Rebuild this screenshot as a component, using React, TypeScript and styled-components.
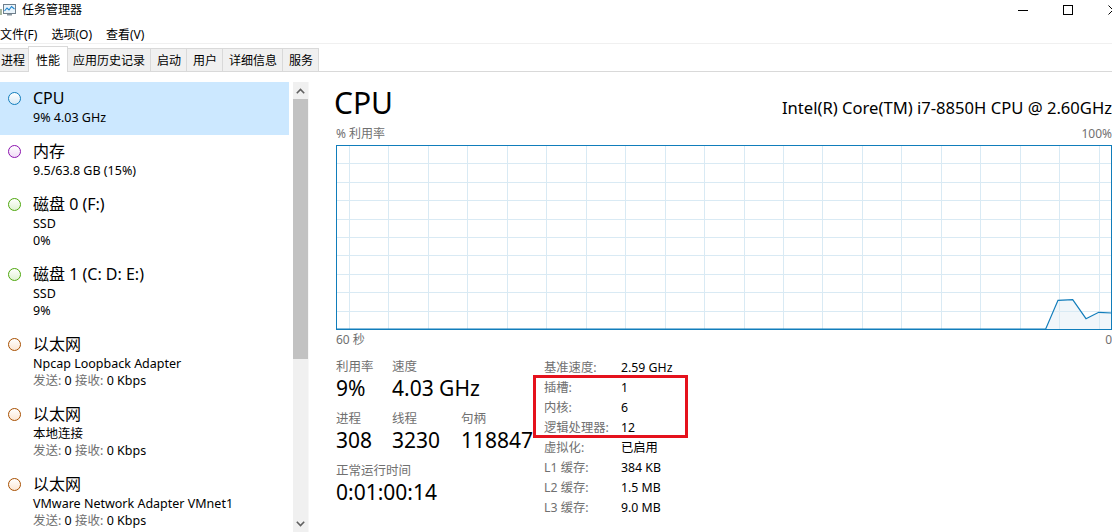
import React from 'react'
import styled, { createGlobalStyle } from 'styled-components'

const FONT = `"Noto Sans", "Noto Sans CJK SC", sans-serif`

const GlobalStyle = createGlobalStyle`
  html, body {
    margin: 0;
    padding: 0;
    background: #fff;
  }
  body {
    font-family: ${FONT};
    color: #000;
  }
  * {
    box-sizing: border-box;
  }
`

const Window = styled.div`
  width: 1112px;
  height: 532px;
  overflow: hidden;
  display: flex;
  flex-direction: column;
  background: #fff;
`

const TitleBar = styled.div`
  height: 19px;
  display: flex;
  align-items: center;
  flex-shrink: 0;
`

const AppIcon = styled.svg`
  margin-left: -2px;
  flex-shrink: 0;
`

const TitleText = styled.span`
  font-size: 12px;
  line-height: 19px;
  margin-left: 6px;
`

const WindowControls = styled.div`
  margin-left: auto;
  margin-right: -23px;
  display: flex;
  height: 100%;
`

const ControlButton = styled.div`
  width: 45px;
  height: 100%;
  display: flex;
  align-items: center;
  justify-content: center;
`

const MenuBar = styled.div`
  height: 25px;
  padding-top: 7px;
  display: flex;
  align-items: center;
  gap: 14px;
  border-bottom: 1px solid #f0f0f0;
  flex-shrink: 0;
`

const MenuItem = styled.span`
  font-size: 12px;
  line-height: 17px;
`

const TabStrip = styled.div`
  height: 28px;
  display: flex;
  align-items: flex-end;
  margin-left: -6px;
  border-bottom: 1px solid #d9d9d9;
  flex-shrink: 0;
`

const Tab = styled.div<{ $active?: boolean; $last?: boolean }>`
  position: relative;
  z-index: ${({ $active }) => ($active ? 1 : 0)};
  height: ${({ $active }) => ($active ? 26 : 23)}px;
  margin: 0 ${({ $active }) => ($active ? '-2px -1px -2px' : '0 0 0')};
  padding: ${({ $active }) => ($active ? '0 7px' : '0 5px 0 6px')};
  display: flex;
  align-items: center;
  font-size: 12px;
  background: ${({ $active }) => ($active ? '#fff' : '#f0f0f0')};
  border-top: 1px solid #d9d9d9;
  border-left: 1px solid #d9d9d9;
  border-right: ${({ $active, $last }) => ($active || $last ? '1px solid #d9d9d9' : 'none')};
`

const Body = styled.div`
  flex: 1;
  min-height: 0;
  display: flex;
`

const Sidebar = styled.div`
  width: 309px;
  flex-shrink: 0;
  display: flex;
`

const ResourceList = styled.div`
  width: 289px;
  margin-right: 4px;
  padding-top: 10px;
  display: flex;
  flex-direction: column;
`

const ResourceItem = styled.div<{ $selected?: boolean }>`
  display: flex;
  align-items: flex-start;
  padding: 5px 0 9px 8px;
  background: ${({ $selected }) => ($selected ? '#cce8ff' : 'transparent')};
`

const Dot = styled.span<{ $color: string; $tint: string }>`
  width: 13px;
  height: 13px;
  margin-top: 4.5px;
  flex-shrink: 0;
  border-radius: 50%;
  border: 1px solid ${({ $color }) => $color};
  background: linear-gradient(180deg, #ffffff 0%, ${({ $tint }) => $tint} 100%);
`

const ItemText = styled.div`
  margin-left: 12px;
  display: flex;
  flex-direction: column;
`

const ItemTitle = styled.div`
  font-size: 16px;
  line-height: 22px;
`

const ItemLine = styled.div`
  font-size: 12.5px;
  line-height: 17px;
  white-space: nowrap;
`

const Muted = styled.span`
  color: #707070;
`

const Scrollbar = styled.div`
  width: 16px;
  margin-top: 10px;
  background: #f0f0f0;
  border-right: 1px solid #f7f7f7;
  display: flex;
  flex-direction: column;
`

const ScrollArrow = styled.div<{ $bottom?: boolean }>`
  height: 17px;
  flex-shrink: 0;
  margin-top: ${({ $bottom }) => ($bottom ? 'auto' : '0')};
  display: flex;
  align-items: center;
  justify-content: center;
`

const ScrollThumb = styled.div`
  height: 260px;
  background: #c2c2c2;
`

const Main = styled.div`
  flex: 1;
  min-width: 0;
  padding-left: 27px;
  display: flex;
  flex-direction: column;
`

const HeaderRow = styled.div`
  padding-top: 11px;
  display: flex;
  justify-content: space-between;
  align-items: baseline;
`

const Heading = styled.div`
  margin-left: -2px;
  font-size: 30px;
  line-height: 40px;
`

const ModelName = styled.div`
  font-size: 16.6px;
  line-height: 24px;
  white-space: nowrap;
`

const AxisRow = styled.div<{ $gap: number }>`
  margin-top: ${({ $gap }) => $gap}px;
  display: flex;
  justify-content: space-between;
  font-size: 12px;
  line-height: 16px;
  color: #707070;
`

const GraphSvg = styled.svg`
  display: block;
  margin-top: 3px;
  flex-shrink: 0;
`

const StatsSection = styled.div`
  display: flex;
`

const LeftStats = styled.div`
  width: 197px;
  padding-top: 10px;
  display: flex;
  flex-direction: column;
  gap: 9px;
`

const StatRow = styled.div`
  display: flex;
`

const StatGroup = styled.div<{ $width?: number }>`
  width: ${({ $width }) => ($width ? `${$width}px` : 'auto')};
  display: flex;
  flex-direction: column;
  white-space: nowrap;
`

const StatLabel = styled.div`
  font-size: 12.5px;
  line-height: 17px;
  color: #707070;
`

const StatValue = styled.div`
  font-size: 21px;
  line-height: 26px;
`

const RightStats = styled.div`
  position: relative;
  margin-left: 11px;
  padding-top: 9px;
`

const InfoGrid = styled.div`
  display: grid;
  grid-template-columns: 77px auto;
  grid-auto-rows: 20px;
  align-items: center;
  font-size: 12.3px;
  white-space: nowrap;
`

const InfoLabel = styled.div`
  color: #707070;
`

const InfoValue = styled.div`
  color: #000;
`

const Highlight = styled.div`
  position: absolute;
  left: -11px;
  top: 27px;
  width: 155px;
  height: 63px;
  border: 3px solid #e5121d;
  pointer-events: none;
`

type Resource = {
  title: string
  lines: React.ReactNode[]
  color: string
  tint: string
  selected?: boolean
}

const netLine = (
  <>
    <Muted>发送:</Muted> 0 <Muted>接收:</Muted> 0 Kbps
  </>
)

const resources: Resource[] = [
  { title: 'CPU', lines: ['9% 4.03 GHz'], color: '#117dbb', tint: '#d6e9f6', selected: true },
  { title: '内存', lines: ['9.5/63.8 GB (15%)'], color: '#8b12ae', tint: '#f0dcf6' },
  { title: '磁盘 0 (F:)', lines: ['SSD', '0%'], color: '#4da60c', tint: '#e0f2d2' },
  { title: '磁盘 1 (C: D: E:)', lines: ['SSD', '9%'], color: '#4da60c', tint: '#e0f2d2' },
  { title: '以太网', lines: ['Npcap Loopback Adapter', netLine], color: '#a74f01', tint: '#fbe6d3' },
  { title: '以太网', lines: ['本地连接', netLine], color: '#a74f01', tint: '#fbe6d3' },
  { title: '以太网', lines: ['VMware Network Adapter VMnet1', netLine], color: '#a74f01', tint: '#fbe6d3' },
]

const tabs = ['进程', '性能', '应用历史记录', '启动', '用户', '详细信息', '服务']

const info: [string, string][] = [
  ['基准速度:', '2.59 GHz'],
  ['插槽:', '1'],
  ['内核:', '6'],
  ['逻辑处理器:', '12'],
  ['虚拟化:', '已启用'],
  ['L1 缓存:', '384 KB'],
  ['L2 缓存:', '1.5 MB'],
  ['L3 缓存:', '9.0 MB'],
]

const GRAPH_W = 776
const GRAPH_H = 185

function UsageGraph() {
  const verticals = Array.from({ length: 20 }, (_, k) => Math.round(13 + 39.45 * k) + 0.5)
  const horizontals = Array.from({ length: 9 }, (_, k) => Math.round(18.4 * (k + 1)) + 0.5)
  const pts = '0,184 709.7,184 722,155.3 736.7,154.7 750,173.7 762.7,167.3 776,168'

  return (
    <GraphSvg width={GRAPH_W} height={GRAPH_H} viewBox={`0 0 ${GRAPH_W} ${GRAPH_H}`}>
      <polygon points={`${pts} 776,184`} fill="#f1f6fa" />
      <g stroke="#d9eaf4" strokeWidth="1" shapeRendering="crispEdges">
        {verticals.map((x) => (
          <line key={`v${x}`} x1={x} y1={0} x2={x} y2={GRAPH_H} />
        ))}
        {horizontals.map((y) => (
          <line key={`h${y}`} x1={0} y1={y} x2={GRAPH_W} y2={y} />
        ))}
      </g>
      <polyline points={pts} fill="none" stroke="#117dbb" strokeWidth="1.2" />
      <rect x="0.5" y="0.5" width={GRAPH_W - 1} height={GRAPH_H - 1} fill="none" stroke="#117dbb" shapeRendering="crispEdges" />
    </GraphSvg>
  )
}

function Chevron({ up }: { up?: boolean }) {
  return (
    <svg width="9" height="6" viewBox="0 0 9 6">
      <polyline
        points={up ? '0.8,5.2 4.5,1.5 8.2,5.2' : '0.8,0.8 4.5,4.5 8.2,0.8'}
        fill="none"
        stroke="#606060"
        strokeWidth="1.6"
      />
    </svg>
  )
}

export default function App() {
  return (
    <>
      <GlobalStyle />
      <Window>
        <TitleBar>
          <AppIcon width="18" height="16" viewBox="0 0 18 16">
            <rect x="0" y="5" width="2" height="8" fill="#7d9a6a" />
            <rect x="2" y="7" width="2" height="6" fill="#a9b8a0" />
            <rect x="5.5" y="2.5" width="12" height="9" fill="#eaf4fb" stroke="#6f7f8c" />
            <polyline points="6.5,9 9,6 11,8 13.5,4.5 16.5,7" fill="none" stroke="#1f86d0" strokeWidth="1.1" />
            <rect x="9" y="12" width="5" height="1.5" fill="#8a96a0" />
          </AppIcon>
          <TitleText>任务管理器</TitleText>
          <WindowControls>
            <ControlButton>
              <svg width="10" height="10" viewBox="0 0 10 10">
                <line x1="0" y1="5.5" x2="10" y2="5.5" stroke="#000" shapeRendering="crispEdges" />
              </svg>
            </ControlButton>
            <ControlButton>
              <svg width="10" height="10" viewBox="0 0 10 10">
                <rect x="0.5" y="0.5" width="9" height="9" fill="none" stroke="#000" shapeRendering="crispEdges" />
              </svg>
            </ControlButton>
            <ControlButton>
              <svg width="10" height="10" viewBox="0 0 10 10">
                <path d="M0.5 0.5 L9.5 9.5 M9.5 0.5 L0.5 9.5" stroke="#000" strokeWidth="1" />
              </svg>
            </ControlButton>
          </WindowControls>
        </TitleBar>

        <MenuBar>
          <MenuItem>文件(F)</MenuItem>
          <MenuItem>选项(O)</MenuItem>
          <MenuItem>查看(V)</MenuItem>
        </MenuBar>

        <TabStrip>
          {tabs.map((t, i) => (
            <Tab key={t} $active={t === '性能'} $last={i === tabs.length - 1}>
              {t}
            </Tab>
          ))}
        </TabStrip>

        <Body>
          <Sidebar>
            <ResourceList>
              {resources.map((r, i) => (
                <ResourceItem key={i} $selected={r.selected}>
                  <Dot $color={r.color} $tint={r.tint} />
                  <ItemText>
                    <ItemTitle>{r.title}</ItemTitle>
                    {r.lines.map((l, j) => (
                      <ItemLine key={j}>{l}</ItemLine>
                    ))}
                  </ItemText>
                </ResourceItem>
              ))}
            </ResourceList>
            <Scrollbar>
              <ScrollArrow>
                <Chevron up />
              </ScrollArrow>
              <ScrollThumb />
              <ScrollArrow $bottom>
                <Chevron />
              </ScrollArrow>
            </Scrollbar>
          </Sidebar>

          <Main>
            <HeaderRow>
              <Heading>CPU</Heading>
              <ModelName>Intel(R) Core(TM) i7-8850H CPU @ 2.60GHz</ModelName>
            </HeaderRow>
            <AxisRow $gap={3}>
              <span>% 利用率</span>
              <span>100%</span>
            </AxisRow>
            <UsageGraph />
            <AxisRow $gap={2}>
              <span>60 秒</span>
              <span>0</span>
            </AxisRow>

            <StatsSection>
              <LeftStats>
                <StatRow>
                  <StatGroup $width={56}>
                    <StatLabel>利用率</StatLabel>
                    <StatValue>9%</StatValue>
                  </StatGroup>
                  <StatGroup>
                    <StatLabel>速度</StatLabel>
                    <StatValue>4.03 GHz</StatValue>
                  </StatGroup>
                </StatRow>
                <StatRow>
                  <StatGroup $width={56}>
                    <StatLabel>进程</StatLabel>
                    <StatValue>308</StatValue>
                  </StatGroup>
                  <StatGroup $width={69}>
                    <StatLabel>线程</StatLabel>
                    <StatValue>3230</StatValue>
                  </StatGroup>
                  <StatGroup>
                    <StatLabel>句柄</StatLabel>
                    <StatValue>118847</StatValue>
                  </StatGroup>
                </StatRow>
                <StatRow>
                  <StatGroup>
                    <StatLabel>正常运行时间</StatLabel>
                    <StatValue>0:01:00:14</StatValue>
                  </StatGroup>
                </StatRow>
              </LeftStats>

              <RightStats>
                <InfoGrid>
                  {info.map(([k, v]) => (
                    <React.Fragment key={k}>
                      <InfoLabel>{k}</InfoLabel>
                      <InfoValue>{v}</InfoValue>
                    </React.Fragment>
                  ))}
                </InfoGrid>
                <Highlight />
              </RightStats>
            </StatsSection>
          </Main>
        </Body>
      </Window>
    </>
  )
}
